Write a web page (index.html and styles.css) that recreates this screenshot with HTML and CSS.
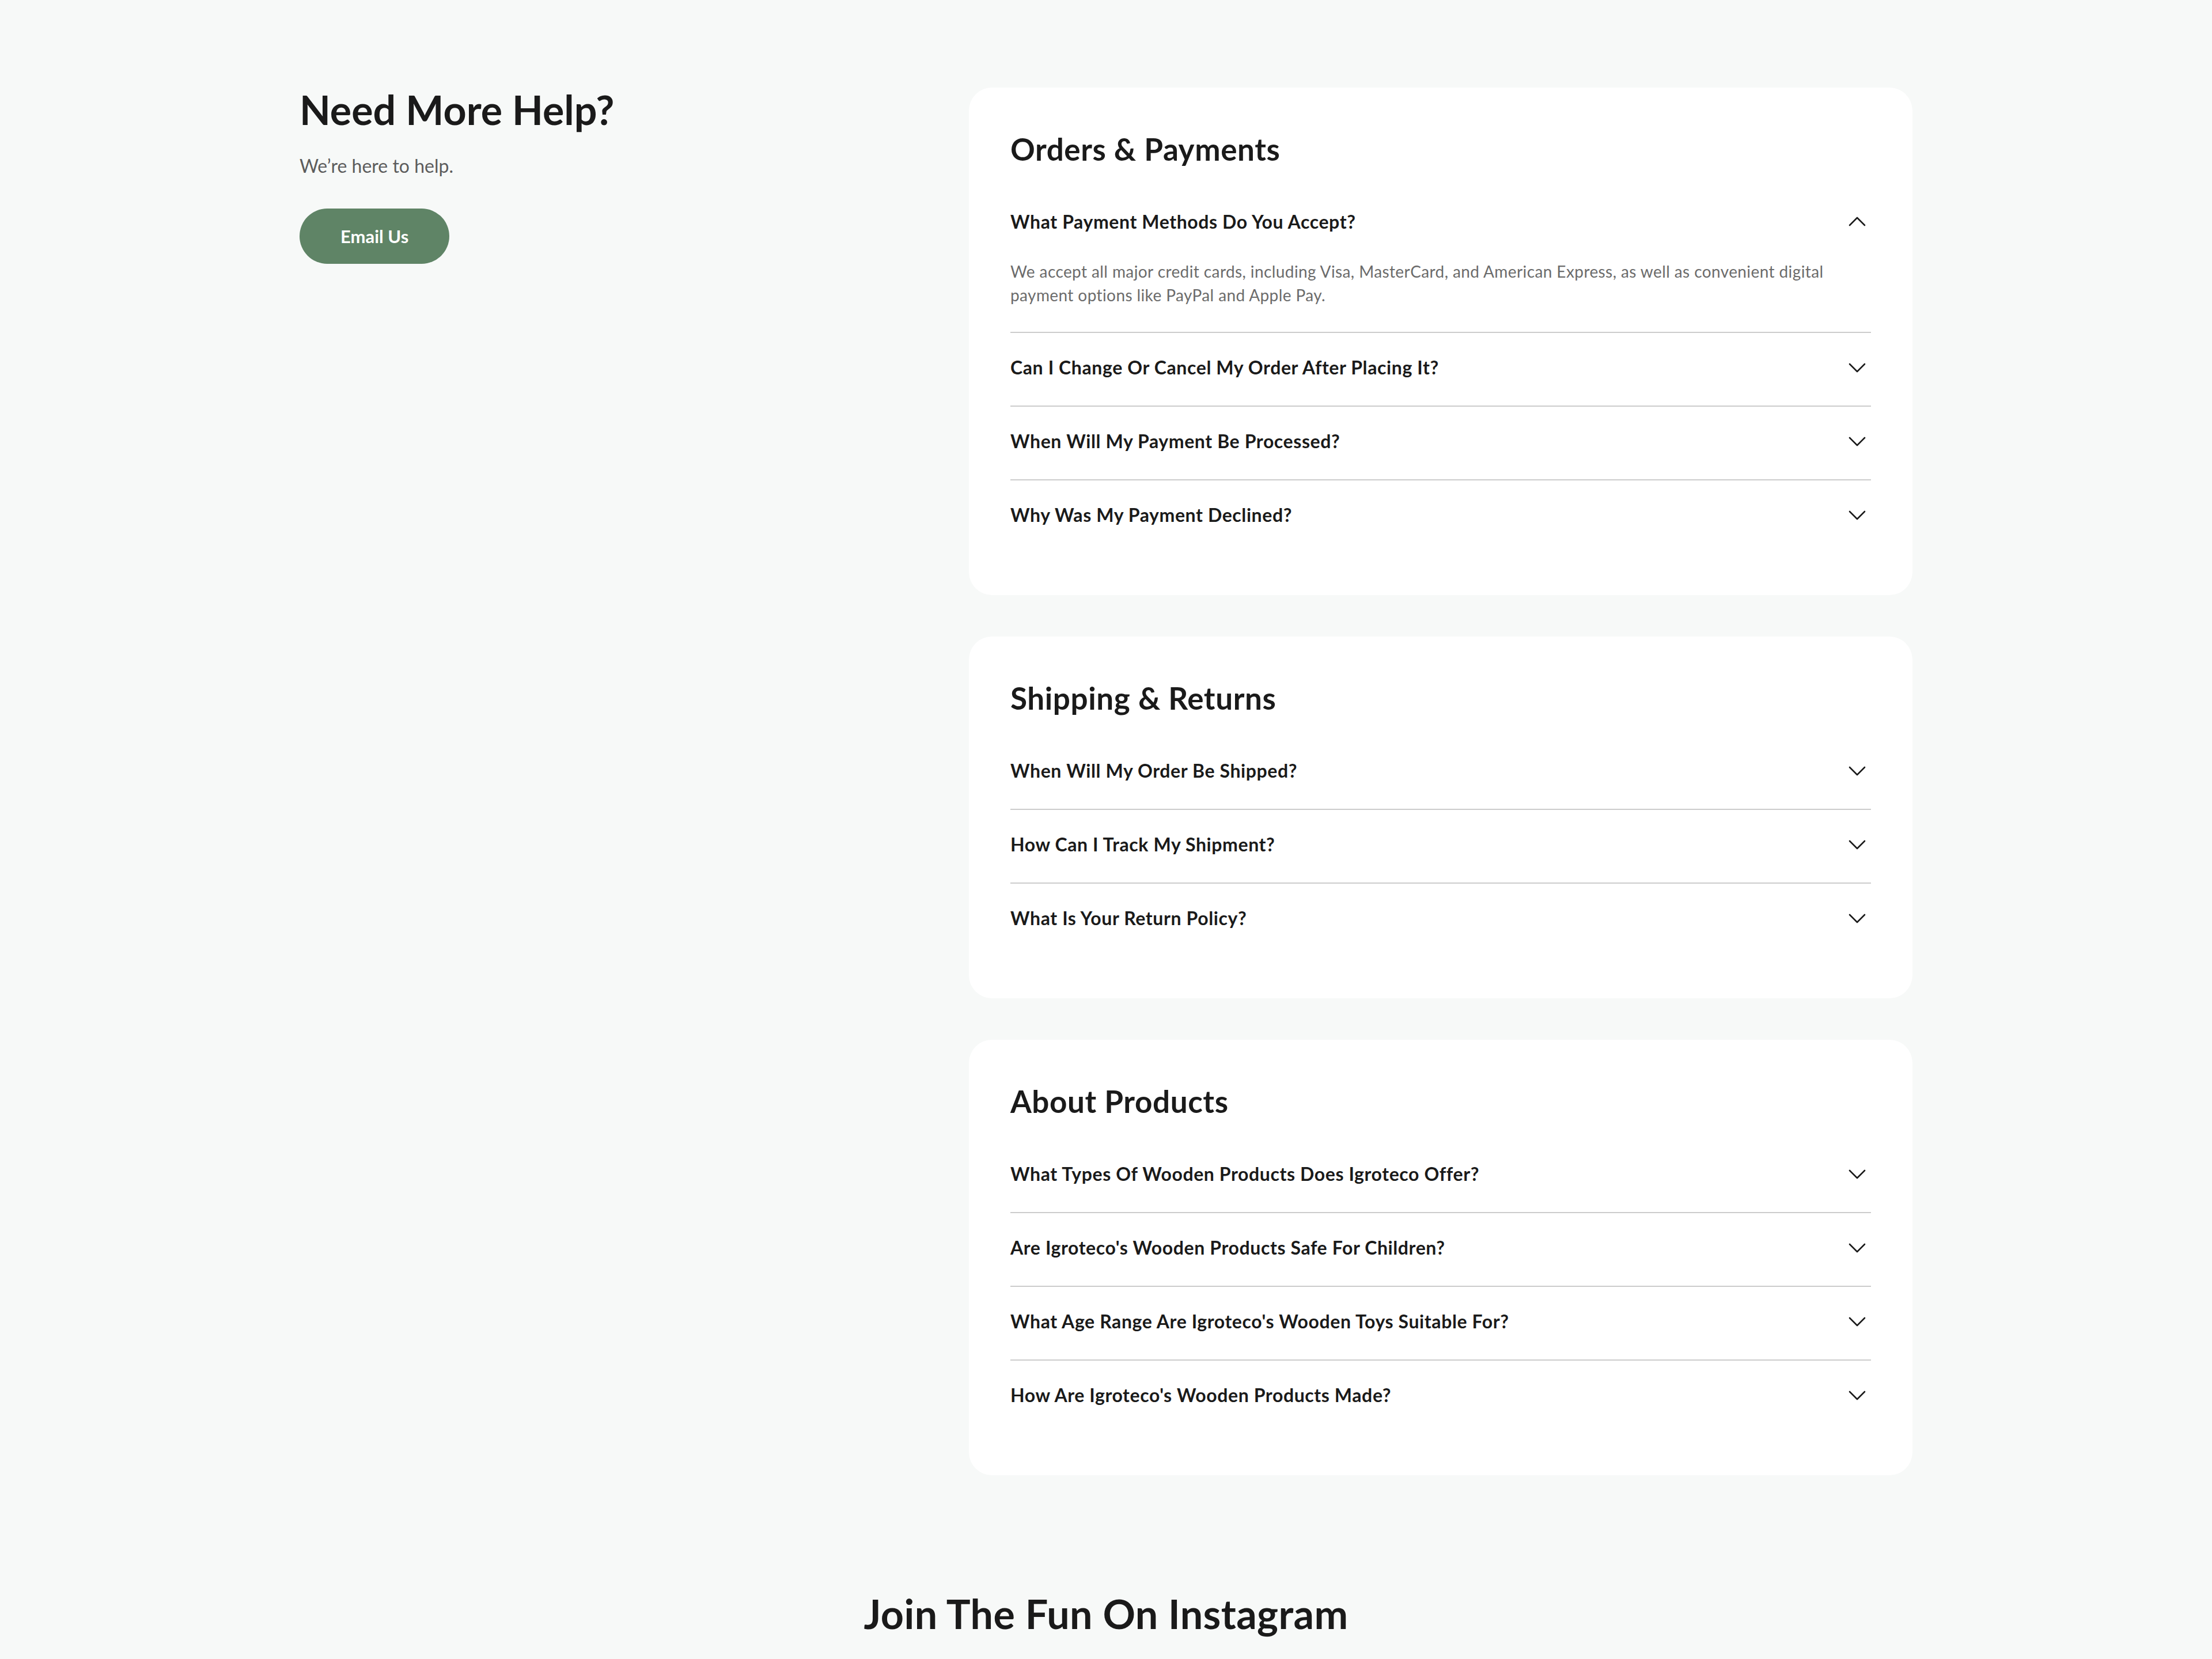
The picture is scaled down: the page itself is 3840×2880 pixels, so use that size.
FILE: index.html
```html
<!doctype html>
<html>

<head>
    <meta charset="UTF-8">
    <title>FAQ - Igroteco</title>

    <link rel="stylesheet" href="styles.css">
</head>

<body>
    <section class="faq">
        <div class="faq-inner">
            <div class="help">
                <h1>Need More Help?</h1>
                <p>We’re here to help.</p>
                <a class="btn" href="#">Email Us</a>
            </div>

            <div class="groups">
                <div class="card">
                    <h2>Orders &amp; Payments</h2>
                    <div class="item open">
                        <div class="q">
                            <span>What Payment Methods Do You Accept?</span>
                            <svg viewBox="0 0 40 40"><polyline points="7,26 20,13 33,26"/></svg>
                        </div>
                        <p class="a">We accept all major credit cards, including Visa, MasterCard, and American Express, as well as convenient digital payment options like PayPal and Apple Pay.</p>
                    </div>
                    <div class="item">
                        <div class="q">
                            <span>Can I Change Or Cancel My Order After Placing It?</span>
                            <svg viewBox="0 0 40 40"><polyline points="7,14 20,27 33,14"/></svg>
                        </div>
                    </div>
                    <div class="item">
                        <div class="q">
                            <span>When Will My Payment Be Processed?</span>
                            <svg viewBox="0 0 40 40"><polyline points="7,14 20,27 33,14"/></svg>
                        </div>
                    </div>
                    <div class="item">
                        <div class="q">
                            <span>Why Was My Payment Declined?</span>
                            <svg viewBox="0 0 40 40"><polyline points="7,14 20,27 33,14"/></svg>
                        </div>
                    </div>
                </div>

                <div class="card">
                    <h2>Shipping &amp; Returns</h2>
                    <div class="item">
                        <div class="q">
                            <span>When Will My Order Be Shipped?</span>
                            <svg viewBox="0 0 40 40"><polyline points="7,14 20,27 33,14"/></svg>
                        </div>
                    </div>
                    <div class="item">
                        <div class="q">
                            <span>How Can I Track My Shipment?</span>
                            <svg viewBox="0 0 40 40"><polyline points="7,14 20,27 33,14"/></svg>
                        </div>
                    </div>
                    <div class="item">
                        <div class="q">
                            <span>What Is Your Return Policy?</span>
                            <svg viewBox="0 0 40 40"><polyline points="7,14 20,27 33,14"/></svg>
                        </div>
                    </div>
                </div>

                <div class="card">
                    <h2>About Products</h2>
                    <div class="item">
                        <div class="q">
                            <span>What Types Of Wooden Products Does Igroteco Offer?</span>
                            <svg viewBox="0 0 40 40"><polyline points="7,14 20,27 33,14"/></svg>
                        </div>
                    </div>
                    <div class="item">
                        <div class="q">
                            <span>Are Igroteco's Wooden Products Safe For Children?</span>
                            <svg viewBox="0 0 40 40"><polyline points="7,14 20,27 33,14"/></svg>
                        </div>
                    </div>
                    <div class="item">
                        <div class="q">
                            <span>What Age Range Are Igroteco's Wooden Toys Suitable For?</span>
                            <svg viewBox="0 0 40 40"><polyline points="7,14 20,27 33,14"/></svg>
                        </div>
                    </div>
                    <div class="item">
                        <div class="q">
                            <span>How Are Igroteco's Wooden Products Made?</span>
                            <svg viewBox="0 0 40 40"><polyline points="7,14 20,27 33,14"/></svg>
                        </div>
                    </div>
                </div>
            </div>
        </div>
    </section>

    <section class="insta">
        <h2>Join The Fun On Instagram</h2>
    </section>
</body>

</html>
```

FILE: styles.css
```css
html {
    --page-bg: #f7f9f8;
    --text: #1a1a1a;
    --text-muted: #5c5c5c;
    --answer: #6b6b6b;
    --line: #cccccc;
    --green: #5f8466;
}
body {
    margin: 0;
    background-color: var(--page-bg);
    color: var(--text);
    font-family: Lato, "Noto Sans", sans-serif;
}

.faq {
    padding: 152px 0 120px;
}
.faq-inner {
    max-width: 2800px;
    margin: 0 auto;
    display: grid;
    grid-template-columns: 1fr 1638px;
    align-items: start;
}

/* left column */
.help h1 {
    margin: 0;
    font-size: 70px;
    line-height: 76px;
    font-weight: 700;
}
.help p {
    margin: 36px 0 0;
    font-size: 32px;
    line-height: 48px;
    color: var(--text-muted);
}
.btn {
    display: inline-flex;
    align-items: center;
    justify-content: center;
    margin-top: 50px;
    height: 96px;
    padding: 0 71px;
    border-radius: 48px;
    background-color: var(--green);
    color: #fff;
    font-size: 31px;
    font-weight: 700;
    text-decoration: none;
}

/* right column */
.groups {
    display: flex;
    flex-direction: column;
    gap: 72px;
}
.card {
    background-color: #fff;
    border-radius: 40px;
    padding: 72px 72px 73px;
}
.card h2 {
    margin: 0 0 31px;
    font-size: 53px;
    line-height: 70px;
    font-weight: 700;
    letter-spacing: 0.6px;
}
.item + .item {
    border-top: 2px solid var(--line);
}
.q {
    display: flex;
    align-items: center;
    justify-content: space-between;
    padding: 38px 0 44px;
    font-size: 32px;
    line-height: 44px;
    font-weight: 700;
    letter-spacing: 0.6px;
    cursor: pointer;
}
.q svg {
    flex: none;
    width: 40px;
    height: 40px;
    margin-right: 4px;
    fill: none;
    stroke: var(--text);
    stroke-width: 2.6;
    stroke-linecap: round;
    stroke-linejoin: round;
}
.a {
    margin: 0;
    padding-bottom: 43px;
    font-size: 28px;
    line-height: 41px;
    letter-spacing: 0.4px;
    color: var(--answer);
}

.insta {
    padding-top: 78px;
    text-align: center;
}
.insta h2 {
    margin: 0;
    font-size: 70px;
    line-height: 84px;
    font-weight: 700;
    letter-spacing: 0.4px;
}
```
